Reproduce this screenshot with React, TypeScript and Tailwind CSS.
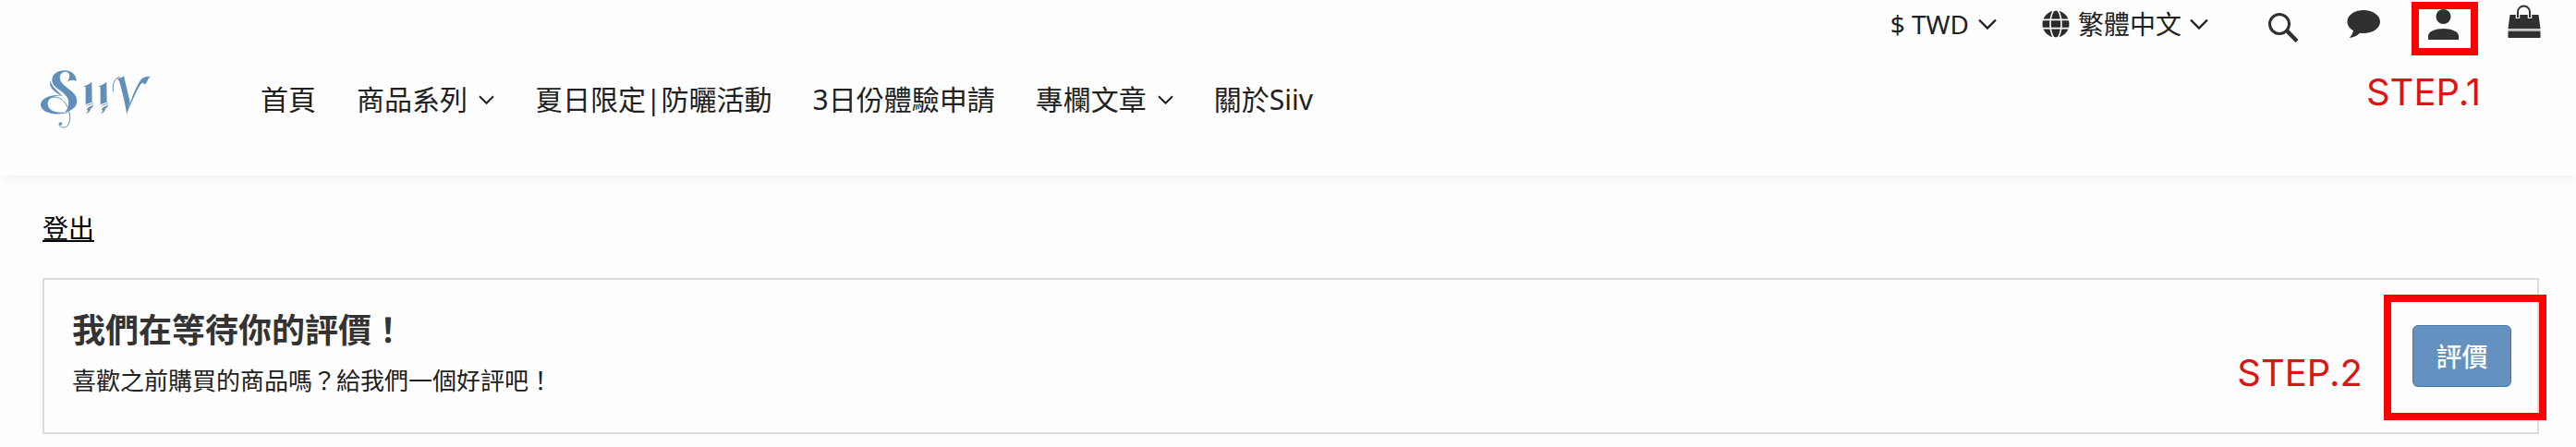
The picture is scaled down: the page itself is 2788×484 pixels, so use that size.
import type { ReactNode } from 'react'

const navItems = [
  { label: '首頁', dropdown: false },
  { label: '商品系列', dropdown: true },
  { label: '夏日限定|防曬活動', dropdown: false },
  { label: '3日份體驗申請', dropdown: false },
  { label: '專欄文章', dropdown: true },
  { label: '關於Siiv', dropdown: false },
]

function Chevron({ className }: { className: string }) {
  return (
    <svg viewBox="0 0 20 12" className={className} fill="none" stroke="currentColor" strokeWidth="2.4" aria-hidden="true">
      <path d="M1 1.5 10 10.5 19 1.5" />
    </svg>
  )
}

function Globe() {
  return (
    <svg viewBox="0 0 30 30" className="size-[30px]" aria-hidden="true">
      <circle cx="15" cy="15" r="14.5" fill="#2b2b2b" />
      <g fill="none" stroke="#fff" strokeWidth="1.6">
        <ellipse cx="15" cy="15" rx="6" ry="15.5" />
        <path d="M0 10.4h30M0 19.6h30" />
      </g>
    </svg>
  )
}

function Logo() {
  return (
    <svg viewBox="72 78 357 189" className="h-[63px] w-[119px]" fill="#5f8fba" stroke="none" role="img" aria-label="Siiv">
      {/* S */}
      <path d="M188 113C187 92 172 79 150 79C125 79 109 92 109 110C109 136 144 142 158 166C167 182 163 203 150 215C175 209 190 197 190 178C190 148 152 138 138 115C129 99 138 84 152 83C167 83 172 98 157 118C167 109 177 109 188 113Z" />
      <path d="M103 112C97 136 118 150 142 162C126 142 110 136 103 112Z" />
      <path d="M146 160C105 154 72 169 72 190C72 211 102 223 137 220C149 219 158 216 165 212C125 222 95 210 95 187C95 169 116 160 146 160Z" />
      <path d="M102 168C132 156 158 184 164 212C172 240 164 264 146 264C136 264 130 257 133 250" fill="none" stroke="#5f8fba" strokeWidth="3" />
      <circle cx="137" cy="252" r="5" />
      {/* double i */}
      {[0, 48].map((x) => (
        <g key={x} transform={`translate(${x} 0)`}>
          <path d="M211 130C220 128 228 123 238 117L239 182L218 189V133Z" />
          <path d="M218 196C226 187 236 190 244 182C241 192 228 189 218 196Z" />
          <path d="M221 205C227 197 235 197 243 190C241 203 233 201 233 206C233 212 226 216 219 219C227 211 227 207 221 205Z" />
        </g>
      ))}
      {/* V */}
      <path d="M308 147C303 121 314 101 330 101" fill="none" stroke="#5f8fba" strokeWidth="3" />
      <path d="M320 105C328 106 336 102 342 97L362 181L352 221C345 182 337 146 327 113Z" />
      <path d="M350 221C362 184 380 132 396 112L402 116C386 136 369 178 350 221Z" />
      <path d="M390 125C393 107 407 97 429 98C420 104 417 118 411 125C407 117 398 119 390 125Z" />
    </svg>
  )
}

function IconButton({ label, children }: { label: string; children: ReactNode }) {
  return (
    <button type="button" aria-label={label} className="h-14 w-10">
      <svg viewBox="0 0 40 56" className="h-14 w-10" fill="#303030" aria-hidden="true">
        {children}
      </svg>
    </button>
  )
}

export default function App() {
  return (
    <div className="bg-[#fefefe] font-['Noto_Sans','Noto_Sans_CJK_TC',sans-serif] text-[#202020]">
      <header className="h-[190px] bg-[#fefefe] shadow-[0_2px_16px_rgba(0,0,0,0.07)]">
        <div className="flex h-14 items-start justify-end pr-9 text-[28px] leading-[52px]">
          <button type="button" aria-haspopup="menu" className="mr-[49px] flex items-center gap-[10px]">
            $ TWD
            <Chevron className="h-3 w-5" />
          </button>
          <button type="button" aria-haspopup="menu" className="mr-[61px] flex items-center gap-[9px]">
            <Globe />
            繁體中文
            <Chevron className="h-3 w-5" />
          </button>
          <div className="flex items-start gap-[47px]">
            <IconButton label="搜尋">
              <circle cx="16" cy="26" r="10.5" fill="none" stroke="#303030" strokeWidth="3" />
              <path d="m23.500 34.500 2.500-2.500 10.500 11-3 3-10-10Z" />
            </IconButton>
            <IconButton label="訊息">
              <path d="M20 11C10 11 2.500 16.500 2.500 23.500c0 4 2.500 7.500 6.500 9.500-.5 3-2 5.500-4.200 8 5-.7 8.500-2.500 11.200-5.300 1.300.2 2.600.3 4 .3 10 0 18-5.500 18-12.500S30 11 20 11Z" />
            </IconButton>
            <div className="relative flex">
              <IconButton label="會員">
                <circle cx="19.500" cy="18" r="8" />
                <path d="M3 43v-4c0-5 8-8 16.500-8S36 34 36 39v4Z" />
              </IconButton>
              <div className="pointer-events-none absolute -left-[15px] top-0.5 h-[58px] w-[72px] border-8 border-[#fe0000]" />
              <p className="absolute -right-5 top-[76px] whitespace-nowrap font-['Inter',sans-serif] text-[40px] leading-[48px] text-[#dc1414]">
                STEP.1
              </p>
            </div>
            <IconButton label="購物車">
              <path d="M4.500 16h31l2 15h-35Z" />
              <path d="M2.500 34h35v7h-35Z" />
              <path d="M2.500 31.500h35v2.500h-35Z" fill="#b5b5b5" />
              <path d="M13 20v-7a6.500 6.500 0 0 1 13 0v7" fill="none" stroke="#fff" strokeWidth="4.500" />
              <path d="M13 19v-6a6.500 6.500 0 0 1 13 0v6" fill="none" stroke="#303030" strokeWidth="2" />
            </IconButton>
          </div>
        </div>
        <div className="flex items-center pl-11 pt-5">
          <a href="#">
            <Logo />
          </a>
          <nav className="ml-[119px] flex items-center gap-11 text-[30px] leading-[44px]">
            {navItems.map((item) => (
              <a key={item.label} href="#" className="flex items-center gap-3 whitespace-nowrap">
                {item.label}
                {item.dropdown && <Chevron className="h-[10px] w-[17px]" />}
              </a>
            ))}
          </nav>
        </div>
      </header>

      <main className="px-[46px] pb-[14px] pr-10 pt-9">
        <a href="#" className="inline-block text-[28px] leading-[42px] text-black underline decoration-2 underline-offset-2">
          登出
        </a>
        <section className="mt-[33px] flex h-[169px] items-center justify-between border-2 border-[#dcdcdc] pl-[30px] pr-7">
          <div className="pb-2">
            <h1 className="text-[36px] font-bold leading-[52px] text-[#333]">我們在等待你的評價！</h1>
            <p className="mt-2 text-[26px] leading-10">喜歡之前購買的商品嗎？給我們一個好評吧！</p>
          </div>
          <div className="relative">
            <button type="button" className="h-[67px] w-[107px] rounded-md border border-[#44769f] bg-[#6491bf] text-[28px] font-medium text-white">
              評價
            </button>
            <div className="pointer-events-none absolute -left-[31px] -top-[33px] h-[136px] w-[176px] border-8 border-[#fe0000]" />
            <p className="absolute right-[161px] top-7 whitespace-nowrap font-['Inter',sans-serif] text-[40px] leading-[48px] text-[#dc1414]">
              STEP.2
            </p>
          </div>
        </section>
      </main>
    </div>
  )
}
